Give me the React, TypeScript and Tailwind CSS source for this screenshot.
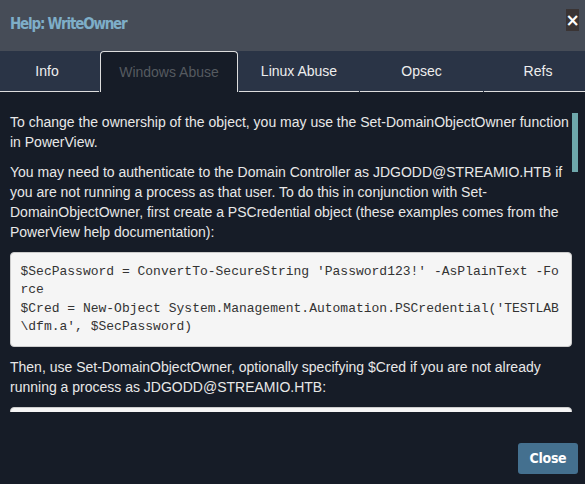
import React from 'react';

const tabs = [
  { label: 'Info', w: 'w-[99px] pr-[5px]' },
  { label: 'Windows Abuse', w: 'w-[138px]', active: true },
  { label: 'Linux Abuse', w: 'w-[120px]' },
  { label: 'Opsec', w: 'w-[123px]' },
  { label: 'Refs', w: 'flex-1 pl-[7px]' },
];

const App: React.FC = () => {
  return (
    <div className="w-[585px] h-[484px] flex flex-col overflow-hidden bg-[#161c27] font-['Liberation_Sans',Arial,sans-serif]">
      {/* Header */}
      <div className="h-[51px] shrink-0 bg-[#464c57] flex items-center justify-between pl-[10px] pr-[6px]">
        <h4 className="text-[15px] font-bold text-[#7eaec8] font-['DejaVu_Sans_Condensed','Liberation_Sans_Narrow',sans-serif] font-stretch-condensed tracking-[-1.2px] -mt-[3px]">
          Help: WriteOwner
        </h4>
        <button className="w-[13px] h-[22px] bg-[#3a3434] text-white flex items-center justify-center text-[17px] font-bold leading-none -mt-[11px] font-['DejaVu_Sans',sans-serif]">
          ×
        </button>
      </div>

      {/* Tabs */}
      <div className="h-[41px] shrink-0 bg-[#2a3446] flex items-end gap-px">
        {tabs.map((t) =>
          t.active ? (
            <div
              key={t.label}
              className={`${t.w} h-[41px] shrink-0 border border-b-0 border-[#dddddd] rounded-t-[4px] bg-[#161c27] flex items-center justify-center text-[14px] text-[#555a60]`}
            >
              {t.label}
            </div>
          ) : (
            <div
              key={t.label}
              className={`${t.w} h-[41px] shrink-0 border-b border-[#dddddd] flex items-center justify-center text-[14px] text-[#eeeeee]`}
            >
              {t.label}
            </div>
          )
        )}
      </div>

      {/* Body */}
      <div className="relative h-[320px] shrink-0 overflow-hidden">
        <div className="pt-[20px] pl-[10px] pr-[13px] text-[14px] leading-[20px] text-[#e8e8e8]">
          <p className="mb-[10px]">
            To change the ownership of the object, you may use the Set-DomainObjectOwner function in PowerView.
          </p>
          <p className="mb-[10px]">
            You may need to authenticate to the Domain Controller as JDGODD@STREAMIO.HTB if you are not running a process as that user. To do this in conjunction with Set-DomainObjectOwner, first create a PSCredential object (these examples comes from the PowerView help documentation):
          </p>
          <pre className="mb-[10px] p-[9.5px] bg-[#f5f5f5] border border-[#cccccc] rounded-[4px] text-[13px] leading-[18.57px] text-[#333333] font-['Liberation_Mono','Courier_New',monospace] whitespace-pre">
            {"$SecPassword = ConvertTo-SecureString 'Password123!' -AsPlainText -Fo\nrce\n$Cred = New-Object System.Management.Automation.PSCredential('TESTLAB\n\\dfm.a', $SecPassword)"}
          </pre>
          <p className="mb-[10px]">
            Then, use Set-DomainObjectOwner, optionally specifying $Cred if you are not already running a process as JDGODD@STREAMIO.HTB:
          </p>
          <pre className="p-[9.5px] bg-[#f5f5f5] border border-[#cccccc] rounded-[4px] text-[13px] leading-[18.57px] text-[#333333] font-['Liberation_Mono','Courier_New',monospace] whitespace-pre">
            {"Set-DomainObjectOwner -Credential $Cred -TargetIdentity dfm -OwnerIde\nntity harmj0y"}
          </pre>
        </div>
        {/* scrollbar thumb */}
        <div className="absolute left-[572px] top-[21px] w-[6px] h-[59px] bg-[#6ea7ab]" />
      </div>

      {/* Footer */}
      <div className="flex-1 flex items-start justify-end pt-[31px] pr-[7px]">
        <button className="w-[60px] h-[31px] bg-[#44708f] rounded-[3px] text-white text-[14px] font-bold font-['DejaVu_Sans_Condensed','Liberation_Sans',sans-serif] font-stretch-condensed tracking-[-0.3px]">
          Close
        </button>
      </div>
    </div>
  );
};

export default App;
